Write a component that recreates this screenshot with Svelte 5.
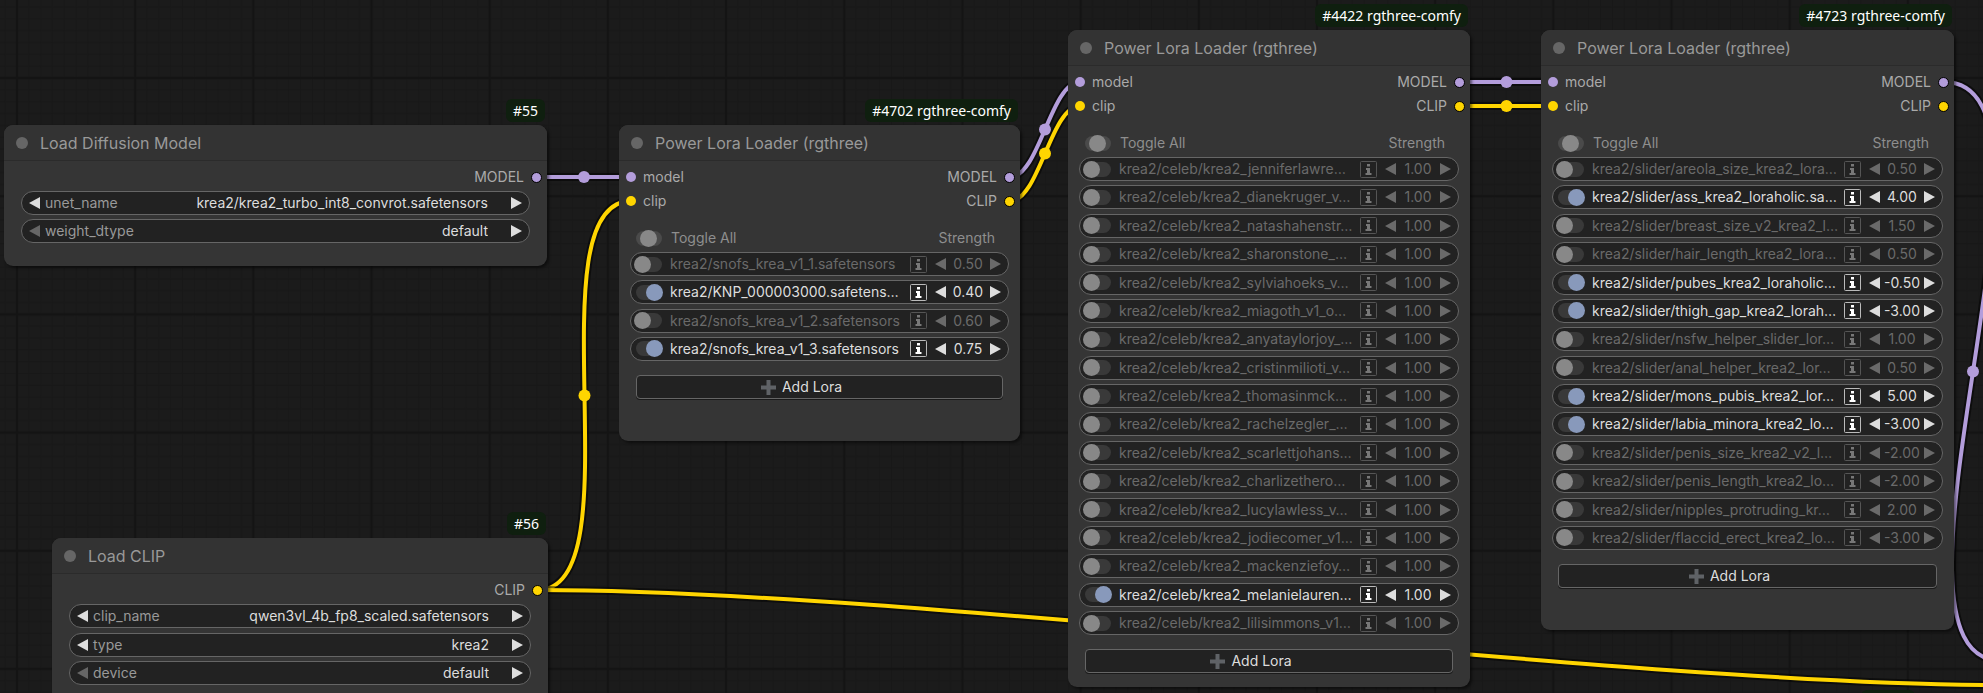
<script lang="ts">
  type Lora = { on: boolean; name: string; strength: string };
  type Combo = { label: string; value: string; first?: boolean };
  type GraphNode = {
    id: string;
    title: string;
    tag: string;
    x: number;
    y: number;
    w: number;
    h: number;
    inputs: string[];
    outputs: string[];
    combos?: Combo[];
    loras?: Lora[];
  };

  const ROW_PITCH = 28.36;
  const ROW_HEIGHT = 24;

  const off = (name: string, strength = '1.00'): Lora => ({ on: false, name, strength });
  const on = (name: string, strength = '1.00'): Lora => ({ on: true, name, strength });

  let nodes: GraphNode[] = $state([
    {
      id: '55',
      title: 'Load Diffusion Model',
      tag: '#55',
      x: 4, y: 125, w: 543, h: 141,
      inputs: [],
      outputs: ['MODEL'],
      combos: [
        { label: 'unet_name', value: 'krea2/krea2_turbo_int8_convrot.safetensors' },
        { label: 'weight_dtype', value: 'default', first: true }
      ]
    },
    {
      id: '56',
      title: 'Load CLIP',
      tag: '#56',
      x: 52, y: 538, w: 496, h: 178,
      inputs: [],
      outputs: ['CLIP'],
      combos: [
        { label: 'clip_name', value: 'qwen3vl_4b_fp8_scaled.safetensors' },
        { label: 'type', value: 'krea2' },
        { label: 'device', value: 'default', first: true }
      ]
    },
    {
      id: '4702',
      title: 'Power Lora Loader (rgthree)',
      tag: '#4702 rgthree-comfy',
      x: 619, y: 125, w: 401, h: 316,
      inputs: ['model', 'clip'],
      outputs: ['MODEL', 'CLIP'],
      loras: [
        off('krea2/snofs_krea_v1_1.safetensors', '0.50'),
        on('krea2/KNP_000003000.safetens…', '0.40'),
        off('krea2/snofs_krea_v1_2.safetensors', '0.60'),
        on('krea2/snofs_krea_v1_3.safetensors', '0.75')
      ]
    },
    {
      id: '4422',
      title: 'Power Lora Loader (rgthree)',
      tag: '#4422 rgthree-comfy',
      x: 1068, y: 30, w: 402, h: 657,
      inputs: ['model', 'clip'],
      outputs: ['MODEL', 'CLIP'],
      loras: [
        off('krea2/celeb/krea2_jenniferlawre…'),
        off('krea2/celeb/krea2_dianekruger_v…'),
        off('krea2/celeb/krea2_natashahenstr…'),
        off('krea2/celeb/krea2_sharonstone_…'),
        off('krea2/celeb/krea2_sylviahoeks_v…'),
        off('krea2/celeb/krea2_miagoth_v1_o…'),
        off('krea2/celeb/krea2_anyataylorjoy_…'),
        off('krea2/celeb/krea2_cristinmilioti_v…'),
        off('krea2/celeb/krea2_thomasinmck…'),
        off('krea2/celeb/krea2_rachelzegler_…'),
        off('krea2/celeb/krea2_scarlettjohans…'),
        off('krea2/celeb/krea2_charlizethero…'),
        off('krea2/celeb/krea2_lucylawless_v…'),
        off('krea2/celeb/krea2_jodiecomer_v1…'),
        off('krea2/celeb/krea2_mackenziefoy…'),
        on('krea2/celeb/krea2_melanielauren…'),
        off('krea2/celeb/krea2_lilisimmons_v1…')
      ]
    },
    {
      id: '4723',
      title: 'Power Lora Loader (rgthree)',
      tag: '#4723 rgthree-comfy',
      x: 1541, y: 30, w: 413, h: 600,
      inputs: ['model', 'clip'],
      outputs: ['MODEL', 'CLIP'],
      loras: [
        off('krea2/slider/areola_size_krea2_lora…', '0.50'),
        on('krea2/slider/ass_krea2_loraholic.sa…', '4.00'),
        off('krea2/slider/breast_size_v2_krea2_l…', '1.50'),
        off('krea2/slider/hair_length_krea2_lora…', '0.50'),
        on('krea2/slider/pubes_krea2_loraholic…', '-0.50'),
        on('krea2/slider/thigh_gap_krea2_lorah…', '-3.00'),
        off('krea2/slider/nsfw_helper_slider_lor…', '1.00'),
        off('krea2/slider/anal_helper_krea2_lor…', '0.50'),
        on('krea2/slider/mons_pubis_krea2_lor…', '5.00'),
        on('krea2/slider/labia_minora_krea2_lo…', '-3.00'),
        off('krea2/slider/penis_size_krea2_v2_l…', '-2.00'),
        off('krea2/slider/penis_length_krea2_lo…', '-2.00'),
        off('krea2/slider/nipples_protruding_kr…', '2.00'),
        off('krea2/slider/flaccid_erect_krea2_lo…', '-3.00')
      ]
    }
  ]);

  // [type, from x, from y, to x, to y]
  const links: [string, number, number, number, number][] = [
    ['model', 537, 177, 631, 177],
    ['clip', 538, 590, 631, 201],
    ['clip', 538, 590, 2002, 685],
    ['model', 1010, 177, 1080, 82],
    ['clip', 1010, 201, 1080, 106],
    ['model', 1460, 82, 1553, 82],
    ['clip', 1460, 106, 1553, 106],
    ['model', 1944, 82, 2002, 661]
  ];

  // control points sit a quarter of the distance out from each slot
  function spline(x1: number, y1: number, x2: number, y2: number) {
    const d = Math.hypot(x2 - x1, y2 - y1) * 0.25;
    return `M${x1} ${y1}C${x1 + d} ${y1} ${x2 - d} ${y2} ${x2} ${y2}`;
  }

  const listHeight = (n: number) => Math.round((n - 1) * ROW_PITCH + ROW_HEIGHT);

  function step(lora: Lora, delta: number) {
    lora.strength = (parseFloat(lora.strength) + delta).toFixed(2);
  }

  function toggleAll(node: GraphNode) {
    const next = !node.loras!.every((l) => l.on);
    for (const l of node.loras!) l.on = next;
  }
</script>

{#snippet arrow(dir: string)}
  <svg class="arrow" viewBox="0 0 11 12" aria-hidden="true">
    <path d={dir === 'left' ? 'M11 0V12L0 6Z' : 'M0 0V12L11 6Z'} />
  </svg>
{/snippet}

<main class="canvas">
  <svg class="links" aria-hidden="true">
    <defs>
      <pattern id="grid" width="100" height="100" patternUnits="userSpaceOnUse" patternTransform="translate(17 78) scale(1.1818)">
        <path class="minor" d="M10 0V100M20 0V100M30 0V100M40 0V100M50 0V100M60 0V100M70 0V100M80 0V100M90 0V100M0 10H100M0 20H100M0 30H100M0 40H100M0 50H100M0 60H100M0 70H100M0 80H100M0 90H100" />
        <path class="major" d="M0 0V100M100 0V100M0 0H100M0 100H100" />
      </pattern>
    </defs>
    <rect width="100%" height="100%" fill="url(#grid)" />
    {#each links as [type, x1, y1, x2, y2]}
      <path class="outline" d={spline(x1, y1, x2, y2)} />
      <path class="link {type}" d={spline(x1, y1, x2, y2)} />
      <circle class="mid {type}" cx={(x1 + x2) / 2} cy={(y1 + y2) / 2} r="6" />
    {/each}
  </svg>

  {#each nodes as node (node.id)}
    <section
      class="node"
      style="left: {node.x}px; top: {node.y}px; width: {node.w}px; min-height: {node.h}px"
      aria-label={node.title}
    >
      <span class="tag">{node.tag}</span>
      <header>
        <span class="collapse"></span>
        <h2>{node.title}</h2>
      </header>

      <div class="slots">
        <ul class="inputs">
          {#each node.inputs as slot}
            <li><i class="dot {slot}"></i>{slot}</li>
          {/each}
        </ul>
        <ul class="outputs">
          {#each node.outputs as slot}
            <li>{slot}<i class="dot {slot.toLowerCase()}"></i></li>
          {/each}
        </ul>
      </div>

      {#if node.combos}
        <div class="combos" style="height: {listHeight(node.combos.length)}px">
          {#each node.combos as combo}
            <div class="pill combo">
              <button class="step" disabled={combo.first} aria-label="Previous {combo.label}">{@render arrow('left')}</button>
              <label for="{node.id}-{combo.label}">{combo.label}</label>
              <select id="{node.id}-{combo.label}">
                <option>{combo.value}</option>
              </select>
              <button class="step" aria-label="Next {combo.label}">{@render arrow('right')}</button>
            </div>
          {/each}
        </div>
      {/if}

      {#if node.loras}
        <div class="list-head">
          <label>
            <input
              type="checkbox"
              class="toggle"
              indeterminate={node.loras.some((l) => l.on)}
              onchange={() => toggleAll(node)}
            />
            Toggle All
          </label>
          <span>Strength</span>
        </div>
        <div class="loras" style="height: {listHeight(node.loras.length)}px">
          {#each node.loras as lora}
            <div class="pill lora" class:on={lora.on}>
              <input type="checkbox" class="toggle" bind:checked={lora.on} aria-label={lora.name} />
              <button class="name">{lora.name}</button>
              <button class="info" aria-label="Lora info">
                <svg viewBox="0 0 17 17" aria-hidden="true">
                  <rect x="0.5" y="0.5" width="16" height="16" rx="1" />
                  <path d="M7 3H10V5.5H7ZM6 7H10V12H11.500V14H5.500V12H7V9H6Z" />
                </svg>
              </button>
              <button class="step" onclick={() => step(lora, -0.05)} aria-label="Decrease strength">{@render arrow('left')}</button>
              <input class="strength" type="text" bind:value={lora.strength} aria-label="Strength" />
              <button class="step" onclick={() => step(lora, 0.05)} aria-label="Increase strength">{@render arrow('right')}</button>
            </div>
          {/each}
        </div>
        <button class="add">
          <svg viewBox="0 0 15 15" aria-hidden="true">
            <path d="M5.500 0H9.500V5.500H15V9.500H9.500V15H5.500V9.500H0V5.500H5.500Z" />
          </svg>
          Add Lora
        </button>
      {/if}
    </section>
  {/each}

  <!-- top edge of the tag of a node below the viewport -->
  <span class="tag peek"></span>
</main>

<style>
  :global(body) {
    background: #1b1b1b;
  }

  .canvas {
    position: relative;
    height: 100vh;
    overflow: hidden;
    font-family: Inter, "Liberation Sans", sans-serif;
    font-size: 14px;
    line-height: 24px;
    color: #aaa;
  }

  .links {
    position: absolute;
    inset: 0;
    width: 100%;
    height: 100%;
  }

  .minor,
  .major {
    fill: none;
    stroke: #181818;
    stroke-width: 1;
  }
  .major {
    stroke: #141414;
    stroke-width: 2;
  }

  .outline {
    fill: none;
    stroke: rgba(0, 0, 0, 0.5);
    stroke-width: 8;
  }
  .link {
    fill: none;
    stroke-width: 4;
  }
  .link.model {
    stroke: #b39ddb;
  }
  .link.clip {
    stroke: #ffd500;
  }
  .mid.model {
    fill: #b39ddb;
  }
  .mid.clip {
    fill: #ffd500;
  }

  /* NODES */
  .node {
    position: absolute;
    box-sizing: border-box;
    background: #353535;
    border-radius: 9px;
    box-shadow: 2px 2px 3px rgba(0, 0, 0, 0.5);
  }

  .tag {
    position: absolute;
    right: 2px;
    bottom: calc(100% + 3px);
    height: 23px;
    padding: 0 7px;
    border-radius: 6px;
    background: #0f1f0f;
    color: #fff;
    font-family: "Noto Sans", sans-serif;
    font-size: 14px;
    line-height: 23px;
    white-space: nowrap;
  }
  .tag.peek {
    right: 68px;
    bottom: -20px;
    width: 40px;
  }

  header {
    display: flex;
    align-items: center;
    gap: 12px;
    box-sizing: border-box;
    height: 36px;
    padding-left: 12px;
    border-bottom: 1px solid #2b2b2b;
    border-radius: 9px 9px 0 0;
    background: #333;
  }
  .collapse {
    width: 12px;
    height: 12px;
    border-radius: 50%;
    background: #666;
  }
  h2 {
    margin: 0;
    font-size: 16px;
    font-weight: 400;
    color: #999;
  }

  .slots {
    display: flex;
    justify-content: space-between;
    padding: 4px 5px 0 7px;
  }
  ul {
    margin: 0;
    padding: 0;
    list-style: none;
  }
  li {
    display: flex;
    align-items: center;
    justify-content: flex-end;
    gap: 7px;
    height: 24px;
  }
  .inputs li {
    justify-content: flex-start;
  }
  .dot {
    box-sizing: border-box;
    width: 10px;
    height: 10px;
    border-radius: 50%;
  }
  .outputs .dot {
    width: 11px;
    height: 11px;
    border: 1px solid #000;
  }
  .dot.model {
    background: #b39ddb;
  }
  .dot.clip {
    background: #ffd500;
  }

  /* WIDGETS */
  button,
  input,
  select {
    margin: 0;
    padding: 0;
    border: 0;
    background: none;
    color: inherit;
    font: inherit;
  }
  button {
    cursor: pointer;
  }

  .combos,
  .loras {
    display: flex;
    flex-direction: column;
    justify-content: space-between;
  }
  .combos {
    margin: 2px 17px 0;
  }
  .loras {
    margin: 2px 11px 0;
  }

  .pill {
    display: flex;
    align-items: center;
    box-sizing: border-box;
    height: 24px;
    padding: 0 7px;
    border: 1px solid #666;
    border-radius: 12px;
    background: #222;
    line-height: 22px;
  }

  .step {
    display: flex;
    flex: none;
    color: #ddd;
  }
  .step:disabled {
    color: #666;
  }
  .arrow {
    width: 11px;
    height: 12px;
    fill: currentColor;
  }

  .combo label {
    margin-left: 5px;
    color: #999;
  }
  .combo select {
    flex: 1;
    min-width: 0;
    margin-right: 23px;
    appearance: none;
    color: #ddd;
    text-align: right;
    text-align-last: right;
  }

  .list-head {
    display: flex;
    justify-content: space-between;
    height: 24px;
    margin-top: 13px;
    padding: 0 25px 0 17px;
    color: #8e8e8e;
  }
  .list-head label {
    display: flex;
    align-items: center;
    gap: 9px;
  }

  .toggle {
    flex: none;
    display: flex;
    align-items: center;
    width: 26px;
    height: 15px;
    border-radius: 8px;
    appearance: none;
    background: #393939;
  }
  .toggle::before {
    content: "";
    flex: none;
    width: 17px;
    height: 17px;
    border-radius: 50%;
    background: #888;
    transform: translateX(-2px);
  }
  .toggle:indeterminate::before {
    transform: translateX(4px);
  }
  .toggle:checked::before {
    background: #8899bb;
    transform: translateX(10px);
  }
  .list-head .toggle {
    background: #4a4a4a;
  }

  .lora {
    padding: 0 7px 0 5px;
    color: #6a6a6a;
  }
  .lora .step {
    color: #6a6a6a;
  }
  .lora.on,
  .lora.on .step {
    color: #ddd;
  }
  .name {
    flex: 1;
    min-width: 0;
    margin-left: 8px;
    overflow: hidden;
    text-align: left;
    white-space: nowrap;
  }
  .info {
    display: flex;
    margin-right: 8px;
  }
  .info svg {
    width: 17px;
    height: 17px;
  }
  .info rect {
    fill: none;
    stroke: #555;
  }
  .info path {
    fill: #777;
  }
  .on .info rect {
    stroke: #bbb;
  }
  .on .info path {
    fill: #fff;
  }
  .strength {
    width: 44px;
    text-align: center;
  }

  .add {
    display: flex;
    align-items: center;
    justify-content: center;
    gap: 6px;
    box-sizing: border-box;
    width: calc(100% - 34px);
    height: 24px;
    margin: 14px 17px 0;
    padding-right: 36px;
    border: 1px solid #666;
    border-radius: 4px;
    background: #222;
    box-shadow: 0 1px 0 #1a1a1a;
    color: #ddd;
  }
  .add svg {
    width: 15px;
    height: 15px;
    fill: #5f6266;
  }
</style>
